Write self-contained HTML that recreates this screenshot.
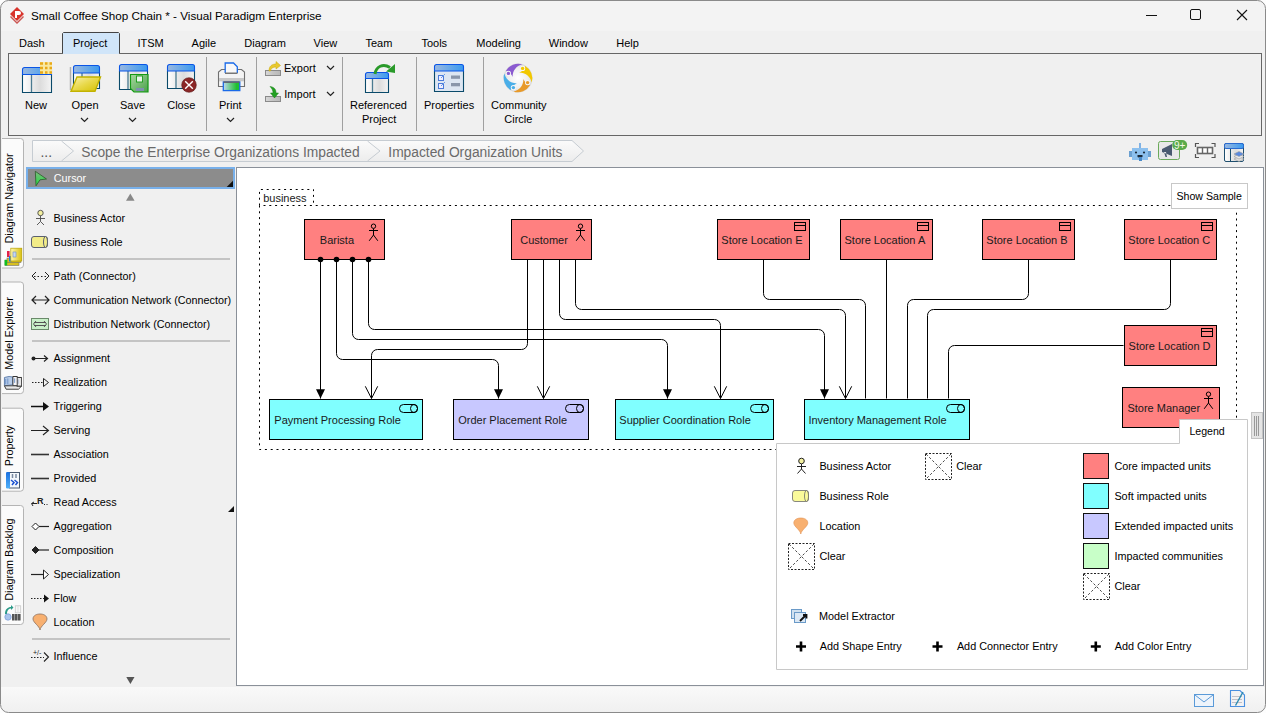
<!DOCTYPE html>
<html><head><meta charset="utf-8"><title>Small Coffee Shop Chain - Visual Paradigm Enterprise</title>
<style>
html,body{margin:0;padding:0;background:#f0f0f0;overflow:hidden;}
svg{display:block;font-family:"Liberation Sans", sans-serif;}
</style></head><body>
<svg width="1266" height="713" viewBox="0 0 1266 713">
<defs>
<linearGradient id="gtitle" x1="0" y1="0" x2="1" y2="0"><stop offset="0" stop-color="#9ab8e0"/><stop offset="1" stop-color="#3a9af0"/></linearGradient>
<linearGradient id="gbody" x1="0" y1="0" x2="1" y2="0"><stop offset="0" stop-color="#ffffff"/><stop offset="0.6" stop-color="#dcdcdc"/><stop offset="1" stop-color="#f4f4f4"/></linearGradient>
<linearGradient id="gfolder" x1="0" y1="0" x2="1" y2="1"><stop offset="0" stop-color="#fbf3b0"/><stop offset="0.5" stop-color="#e8d848"/><stop offset="1" stop-color="#d4c000"/></linearGradient>
<linearGradient id="gsave" x1="0" y1="0" x2="1" y2="1"><stop offset="0" stop-color="#a8d8a0"/><stop offset="1" stop-color="#4aa04a"/></linearGradient>
<linearGradient id="gprint" x1="0" y1="0" x2="1" y2="0"><stop offset="0" stop-color="#c0d8f0"/><stop offset="0.8" stop-color="#20c030"/></linearGradient>
<linearGradient id="gcrumb" x1="0" y1="0" x2="0" y2="1"><stop offset="0" stop-color="#fbfbfb"/><stop offset="1" stop-color="#ececec"/></linearGradient>
<linearGradient id="gstatus" x1="0" y1="0" x2="0" y2="1"><stop offset="0" stop-color="#f9f9f9"/><stop offset="1" stop-color="#f0f0f0"/></linearGradient>
<radialGradient id="gcomm"><stop offset="0" stop-color="#ffffff"/><stop offset="0.7" stop-color="#eeeeee"/><stop offset="1" stop-color="#d8d8d8"/></radialGradient>
<linearGradient id="gbook" x1="0" y1="0" x2="1" y2="0"><stop offset="0" stop-color="#fff8b0"/><stop offset="1" stop-color="#d8c010"/></linearGradient>
<linearGradient id="gprop" x1="0" y1="0" x2="0" y2="1"><stop offset="0" stop-color="#1a70e0"/><stop offset="1" stop-color="#50b0f8"/></linearGradient>
<linearGradient id="gcur" x1="0" y1="0" x2="0" y2="1"><stop offset="0" stop-color="#80b880"/><stop offset="1" stop-color="#20e040"/></linearGradient>
<linearGradient id="gtray" x1="0" y1="0" x2="1" y2="0"><stop offset="0" stop-color="#d8d8d8"/><stop offset="0.5" stop-color="#c4c4c4"/><stop offset="1" stop-color="#b8b8b8"/></linearGradient>
</defs>
<rect x="0" y="0" width="1266" height="713" fill="#f0f0f0"/>
<rect x="0" y="0" width="1266" height="31" fill="#f3f3f3"/>
<g transform="translate(10,7)"><path d="M7 0 L14 7 L7 14 L0 7 Z" fill="#d8342c"/><path d="M1 9 L7 15 L13 9 L14 10 L7 17 L0 10 Z" fill="#c0302a" opacity="0.8"/><path d="M5 4 h4 a2 2 0 0 1 0 4 h-2 v3 h-2 z" fill="#fff"/></g>
<text x="31" y="20" font-size="11.7" fill="#000" text-anchor="start" >Small Coffee Shop Chain * - Visual Paradigm Enterprise</text>
<line x1="1146" y1="15.5" x2="1157" y2="15.5" stroke="#111" stroke-width="1" />
<rect x="1190.5" y="9.5" width="10" height="10" fill="none" stroke="#111" stroke-width="1" rx="1.5"/>
<path d="M1237 10 L1247 20 M1247 10 L1237 20" stroke="#111" stroke-width="1.1"/>
<path d="M62.5 54 V33.5 L63.5 32.5 H118.5 L119.5 33.5 V54" fill="#d0e5f9" stroke="#444" stroke-width="1"/>
<text x="19" y="47" font-size="11" fill="#000" text-anchor="start" >Dash</text>
<text x="73" y="47" font-size="11" fill="#000" text-anchor="start" >Project</text>
<text x="137.4" y="47" font-size="11" fill="#000" text-anchor="start" >ITSM</text>
<text x="191.6" y="47" font-size="11" fill="#000" text-anchor="start" >Agile</text>
<text x="244.3" y="47" font-size="11" fill="#000" text-anchor="start" >Diagram</text>
<text x="313.6" y="47" font-size="11" fill="#000" text-anchor="start" >View</text>
<text x="365.4" y="47" font-size="11" fill="#000" text-anchor="start" >Team</text>
<text x="421.4" y="47" font-size="11" fill="#000" text-anchor="start" >Tools</text>
<text x="476.3" y="47" font-size="11" fill="#000" text-anchor="start" >Modeling</text>
<text x="548.8" y="47" font-size="11" fill="#000" text-anchor="start" >Window</text>
<text x="616.2" y="47" font-size="11" fill="#000" text-anchor="start" >Help</text>
<rect x="8.5" y="53.5" width="1253" height="82" fill="#f0f0f0" stroke="#666"/>
<rect x="63" y="52" width="56" height="2" fill="#d0e5f9"/>
<line x1="206.5" y1="57" x2="206.5" y2="131" stroke="#a0a0a0" stroke-width="1" />
<line x1="256.5" y1="57" x2="256.5" y2="131" stroke="#a0a0a0" stroke-width="1" />
<line x1="342.5" y1="57" x2="342.5" y2="131" stroke="#a0a0a0" stroke-width="1" />
<line x1="416.5" y1="57" x2="416.5" y2="131" stroke="#a0a0a0" stroke-width="1" />
<line x1="483.5" y1="57" x2="483.5" y2="131" stroke="#a0a0a0" stroke-width="1" />
<text x="25" y="108.5" font-size="11" fill="#000" text-anchor="start" >New</text>
<text x="71.6" y="108.5" font-size="11" fill="#000" text-anchor="start" >Open</text>
<text x="120" y="108.5" font-size="11" fill="#000" text-anchor="start" >Save</text>
<text x="167.2" y="109" font-size="11" fill="#000" text-anchor="start" >Close</text>
<text x="219" y="108.5" font-size="11" fill="#000" text-anchor="start" >Print</text>
<text x="284" y="72" font-size="11" fill="#000" text-anchor="start" >Export</text>
<text x="284.3" y="98" font-size="11" fill="#000" text-anchor="start" >Import</text>
<text x="350" y="109" font-size="11" fill="#000" text-anchor="start" >Referenced</text>
<text x="362" y="122.6" font-size="11" fill="#000" text-anchor="start" >Project</text>
<text x="424" y="109" font-size="11" fill="#000" text-anchor="start" >Properties</text>
<text x="491" y="109" font-size="11" fill="#000" text-anchor="start" >Community</text>
<text x="504.3" y="122.6" font-size="11" fill="#000" text-anchor="start" >Circle</text>
<path d="M81.0 118 L84.5 121.5 L88.0 118" fill="none" stroke="#222" stroke-width="1.2"/>
<path d="M129.0 118 L132.5 121.5 L136.0 118" fill="none" stroke="#222" stroke-width="1.2"/>
<path d="M227.0 118 L230.5 121.5 L234.0 118" fill="none" stroke="#222" stroke-width="1.2"/>
<path d="M327.0 66 L330.5 69.5 L334.0 66" fill="none" stroke="#222" stroke-width="1.2"/>
<path d="M327.0 92 L330.5 95.5 L334.0 92" fill="none" stroke="#222" stroke-width="1.2"/>
<g transform="translate(22,67)"><path d="M0.5 7.5 V25.5 H29.5 V7.5" fill="url(#gbody)" stroke="#0a4a6a" stroke-width="1.1"/><line x1="9.5" y1="7.5" x2="9.5" y2="25" stroke="#4a7a90" stroke-width="1.3"/><path d="M0.5 7.5 V2.5 a2 2 0 0 1 2 -2 H27.5 a2 2 0 0 1 2 2 V7.5 Z" fill="url(#gtitle)" stroke="#0a55e6" stroke-width="1.1"/></g>
<g transform="translate(40,62)"><rect x="0" y="0" width="12" height="12" fill="#f8e8a0"/><path d="M0 1.5 H3 M5 1.5 H7.5 M9.5 1.5 H12 M0 6 H3 M5 6 H7.5 M9.5 6 H12 M0 10.5 H3 M5 10.5 H7.5 M9.5 10.5 H12" stroke="#e8a818" stroke-width="2.6"/></g>
<path d="M70.5 67 V90" stroke="#b0b0b0" stroke-width="1.5"/>
<g transform="translate(73,65)"><path d="M0.5 8 V23.5 H26.5 V8" fill="url(#gbody)" stroke="#0a4a6a" stroke-width="1.1"/><line x1="9" y1="8" x2="9" y2="23" stroke="#4a7a90" stroke-width="1.3"/><path d="M0.5 8 V2.5 a2 2 0 0 1 2 -2 H24.5 a2 2 0 0 1 2 2 V8 Z" fill="url(#gtitle)" stroke="#0a55e6" stroke-width="1.1"/></g>
<path d="M71 91.3 L77 77 H100.5 L95 91.3 Z" fill="url(#gfolder)" stroke="#c2b200" stroke-width="1.4"/>
<g transform="translate(119,64)"><path d="M0.5 7 V25.5 H28.5 V7" fill="url(#gbody)" stroke="#0a4a6a" stroke-width="1.1"/><line x1="9" y1="7" x2="9" y2="25" stroke="#4a7a90" stroke-width="1.3"/><path d="M0.5 7 V2.5 a2 2 0 0 1 2 -2 H26.5 a2 2 0 0 1 2 2 V7 Z" fill="url(#gtitle)" stroke="#0a55e6" stroke-width="1.1"/></g>
<g transform="translate(130,74)"><path d="M0.5 0.5 H18 V18 H4 L0.5 14.5 Z" fill="url(#gsave)" stroke="#149a14" stroke-width="1.2"/><rect x="6.5" y="2" width="6" height="6" fill="#eaf5ea" stroke="#149a14" stroke-width="0.9"/><rect x="6" y="14" width="8" height="3" fill="#8090b0"/></g>
<g transform="translate(167,64)"><path d="M0.5 7 V24.5 H27.5 V7" fill="url(#gbody)" stroke="#0a4a6a" stroke-width="1.1"/><line x1="9" y1="7" x2="9" y2="24" stroke="#4a7a90" stroke-width="1.3"/><path d="M0.5 7 V2.5 a2 2 0 0 1 2 -2 H25.5 a2 2 0 0 1 2 2 V7 Z" fill="url(#gtitle)" stroke="#0a55e6" stroke-width="1.1"/></g>
<g transform="translate(189,85)"><circle cx="0" cy="0" r="7.3" fill="#8b2626" stroke="#5a1818" stroke-width="0.6"/><path d="M-3.8 -3.8 L3.8 3.8 M3.8 -3.8 L-3.8 3.8" stroke="#fff" stroke-width="1.4"/></g>
<g><path d="M218.5 86.5 V72 L221.5 69.5 H241.5 L244.5 72 V86.5 Z" fill="#f4f4f4" stroke="#707070" stroke-width="1.1"/><rect x="219" y="78" width="25" height="3.3" fill="#c8c8c8"/><path d="M225.2 73 V63 H233.5 L237.3 66.8 V73" fill="#f8f8f8" stroke="#1a6ae8" stroke-width="1.3"/><rect x="225" y="72.5" width="12.5" height="1.5" fill="#777"/><rect x="223.3" y="82" width="16.5" height="8.6" fill="url(#gprint)" stroke="#1a6ae8" stroke-width="1.3"/><rect x="223.5" y="81.3" width="16" height="1.6" fill="#666"/></g>
<g transform="translate(265,61)"><rect x="0.5" y="9.5" width="15" height="5" fill="url(#gtray)" stroke="#8a8a8a"/><path d="M4 10 C4 5 7 3 11 3 V0.5 L15.5 4.5 L11 8 V6 C8 6 6 7 5.5 10 Z" fill="#e8c830" stroke="#c8a800" stroke-width="0.5"/></g>
<g transform="translate(265,86)"><rect x="0.5" y="10.5" width="15" height="5" fill="url(#gtray)" stroke="#8a8a8a"/><path d="M5 0.5 C9 1 11 3 11 7 H13.5 L9.5 12 L5.5 7 H8 C8 4.5 7 2.5 5 0.5 Z" fill="#22a022" stroke="#178017" stroke-width="0.5"/></g>
<g transform="translate(365,72)"><path d="M0.5 6.5 V20.5 H23.5 V6.5" fill="url(#gbody)" stroke="#0a4a6a" stroke-width="1.1"/><line x1="7.5" y1="6.5" x2="7.5" y2="20" stroke="#4a7a90" stroke-width="1.3"/><path d="M0.5 6.5 V2.5 a2 2 0 0 1 2 -2 H21.5 a2 2 0 0 1 2 2 V6.5 Z" fill="url(#gtitle)" stroke="#0a55e6" stroke-width="1.1"/></g>
<path d="M375 74 C376 66.5 383 63 390 67.5" fill="none" stroke="#2a9a2a" stroke-width="3"/>
<path d="M386 71.5 L395 64 L395 73 Z" fill="#2a9a2a"/>
<g transform="translate(434,64)"><path d="M0.5 7 V27.5 H29.5 V7" fill="#dde6f2" stroke="#0a4a6a" stroke-width="1.1"/><path d="M0.5 7 V2.5 a2 2 0 0 1 2 -2 H27.5 a2 2 0 0 1 2 2 V7 Z" fill="url(#gtitle)" stroke="#0a55e6" stroke-width="1.1"/><rect x="4.5" y="11.5" width="5" height="5" fill="#eef" stroke="#4a7ad8"/><rect x="4.5" y="19.5" width="5" height="5" fill="#eef" stroke="#4a7ad8"/><path d="M7 14 L11 10 M7 22 L11 18" stroke="#6a9ae8" stroke-width="1"/><rect x="17" y="11.5" width="9" height="3.3" fill="#8a96aa"/><rect x="17" y="19" width="9" height="3.3" fill="#8a96aa"/></g>
<g transform="translate(518,78)"><circle r="14.5" fill="url(#gcomm)"/><g transform="rotate(0)"><path d="M4.4 -13.7 A14.2 14.2 0 0 0 -12.1 -7.1 C-9 -6 -6.5 -4 -5.4 -1.1 C-5.5 -7 -2 -12 4.4 -13.7 Z" fill="#8a5ad0"/><circle cx="-9.6" cy="-4.6" r="2.6" fill="#f6f6f6"/><circle cx="-9.6" cy="-4.6" r="1.7" fill="#8a5ad0"/></g><g transform="rotate(90)"><path d="M4.4 -13.7 A14.2 14.2 0 0 0 -12.1 -7.1 C-9 -6 -6.5 -4 -5.4 -1.1 C-5.5 -7 -2 -12 4.4 -13.7 Z" fill="#f2c800"/><circle cx="-9.6" cy="-4.6" r="2.6" fill="#f6f6f6"/><circle cx="-9.6" cy="-4.6" r="1.7" fill="#f2c800"/></g><g transform="rotate(180)"><path d="M4.4 -13.7 A14.2 14.2 0 0 0 -12.1 -7.1 C-9 -6 -6.5 -4 -5.4 -1.1 C-5.5 -7 -2 -12 4.4 -13.7 Z" fill="#e89a2a"/><circle cx="-9.6" cy="-4.6" r="2.6" fill="#f6f6f6"/><circle cx="-9.6" cy="-4.6" r="1.7" fill="#e89a2a"/></g><g transform="rotate(270)"><path d="M4.4 -13.7 A14.2 14.2 0 0 0 -12.1 -7.1 C-9 -6 -6.5 -4 -5.4 -1.1 C-5.5 -7 -2 -12 4.4 -13.7 Z" fill="#4aaee8"/><circle cx="-9.6" cy="-4.6" r="2.6" fill="#f6f6f6"/><circle cx="-9.6" cy="-4.6" r="1.7" fill="#4aaee8"/></g></g>
<path d="M32.5 140.5 H572 L583.5 151 L572 161.5 H32.5 Z" fill="url(#gcrumb)" stroke="#c6ccd2"/>
<path d="M61.5 141 L73.5 151 L61.5 161" fill="none" stroke="#c6ccd2"/>
<path d="M367.5 141 L380 151 L367.5 161" fill="none" stroke="#c6ccd2"/>
<text x="40.5" y="157.3" font-size="13.8" fill="#555" text-anchor="start" >...</text>
<text x="81.3" y="157.3" font-size="13.8" fill="#6a6a6a" text-anchor="start" >Scope the Enterprise Organizations Impacted</text>
<text x="388.3" y="157.3" font-size="13.8" fill="#6a6a6a" text-anchor="start" >Impacted Organization Units</text>
<g transform="translate(1129,142)"><rect x="3" y="6" width="16" height="12" fill="#8cc0ee"/><rect x="0" y="9" width="3" height="6" fill="#6a9fd0"/><rect x="19" y="9" width="3" height="6" fill="#6a9fd0"/><rect x="10" y="1" width="2" height="5" fill="#7fb2e5"/><circle cx="7" cy="10.5" r="1.1" fill="#1a2a3a"/><circle cx="15" cy="10.5" r="1.1" fill="#1a2a3a"/><path d="M8.5 13 H13.5 V15 L11 16 L8.5 15 Z" fill="#1a2a3a"/><rect x="10" y="15" width="3" height="4" fill="#4a8ac8"/></g>
<g transform="translate(1158,141)"><rect x="0.5" y="0.5" width="21" height="18" rx="2" fill="#e8e8e8" stroke="#6aaa5a"/><path d="M4 8 L14 3 V15 L4 11 Z M6 11 L7.5 16 H9 L8 11" fill="#4a5a70"/><rect x="14.2" y="-1" width="15" height="10" rx="5" fill="#5aaa4a"/><text x="21.7" y="7.8" font-size="10" fill="#f8f8e8" text-anchor="middle">9+</text></g>
<g transform="translate(1195,143)"><path d="M0.5 4 V0.5 H4 M16.5 0.5 H20 V4 M20 11 V14.5 H16.5 M4 14.5 H0.5 V11" fill="none" stroke="#555" stroke-width="1.2"/><rect x="2.5" y="4.5" width="15" height="6" fill="#fff" stroke="#666" stroke-width="1.6"/><path d="M7.5 5 V10 M12.5 5 V10" stroke="#666" stroke-width="1.4"/></g>
<g transform="translate(1224,143)"><rect x="0.5" y="0.5" width="19" height="18" rx="1.5" fill="url(#gbody)" stroke="#1e4e6e"/><rect x="0.5" y="0.5" width="19" height="5" rx="1.5" fill="url(#gtitle)" stroke="#2a6bd0"/><line x1="6.5" y1="6" x2="6.5" y2="18" stroke="#1e4e6e"/><path d="M10 16 L15 13.5 L20 16 L15 18.5 Z" fill="#e0e0e0" stroke="#9a9a9a" stroke-width="0.6"/><path d="M10 13.5 L15 11 L20 13.5 L15 16 Z" fill="#e8e8e8" stroke="#9a9a9a" stroke-width="0.6"/><path d="M10 11 L15 8.5 L20 11 L15 13.5 Z" fill="#5a8ae0" stroke="#9a9a9a" stroke-width="0.6"/></g>
<path d="M2 138.5 H20.5 a3 3 0 0 1 3 3 V265 a3 3 0 0 1 -3 3 H2" fill="#fbfbfb" stroke="#b4b4b4"/>
<text transform="translate(13.4,243.5) rotate(-90)" font-size="10.8" fill="#000">Diagram Navigator</text>
<g><rect x="5" y="260" width="14" height="5.5" fill="#d8c020" stroke="#707070" stroke-width="0.6"/><rect x="7" y="258" width="14" height="4.5" fill="#d8c020" stroke="#707070" stroke-width="0.6"/><rect x="7" y="251" width="2.6" height="6" fill="#e0204a"/><rect x="9" y="256" width="2.4" height="5.5" fill="#1a7ae8"/><rect x="4.6" y="260" width="2.6" height="5.5" fill="#10c020"/><rect x="10.8" y="248.2" width="11" height="12.8" fill="url(#gbook)" stroke="#b8a000" stroke-width="0.7"/><rect x="13" y="252" width="3" height="5" fill="#c8d8f0" stroke="#6a8ac8" stroke-width="0.6"/></g>
<path d="M2 282 H20.5 a3 3 0 0 1 3 3 V390.6 a3 3 0 0 1 -3 3 H2" fill="#fbfbfb" stroke="#b4b4b4"/>
<text transform="translate(13.4,369.8) rotate(-90)" font-size="10.8" fill="#000">Model Explorer</text>
<g transform="translate(4,376) scale(0.85,0.98)" stroke-width="1"><path d="M0.5 1.5 L6 0.5 L10 1 V9 L0.5 10 Z" fill="#b8cce8" stroke="#5a7aa8"/><path d="M2 3 V8.5 M4.5 2.5 V8.5" stroke="#6a90c8"/><rect x="15" y="1.5" width="5.5" height="9" fill="#e8e8e8" stroke="#333"/><path d="M16.5 3.5 V8" stroke="#8aa0c8"/><rect x="10.5" y="0.5" width="5" height="9.5" fill="#f4f4f8" stroke="#333"/><path d="M12.5 2.5 V7" stroke="#6a90c8"/><path d="M0.5 10 L2.5 13.5 H17 L20.5 10.5 H15 V10 H0.5 Z" fill="#e8e8e8" stroke="#333"/></g>
<path d="M2 408.2 H20.5 a3 3 0 0 1 3 3 V488.2 a3 3 0 0 1 -3 3 H2" fill="#fbfbfb" stroke="#b4b4b4"/>
<text transform="translate(13.4,466.3) rotate(-90)" font-size="10.8" fill="#000">Property</text>
<g transform="translate(6,472)"><rect x="3.5" y="0.5" width="10" height="15.5" fill="#f4f8fc" stroke="#4a5a70"/><rect x="0" y="0" width="4" height="16.5" rx="1.2" fill="url(#gprop)"/><path d="M6.5 2 V6 M10 2 V6" stroke="#7888a0" stroke-width="1.5"/><path d="M5 8 L8 10.5 L6 13 M8.5 8 L11.5 10.5 L9.5 13" stroke="#1a50d0" stroke-width="1.5" fill="none"/></g>
<path d="M2 505.5 H20.5 a3 3 0 0 1 3 3 V621.5 a3 3 0 0 1 -3 3 H2" fill="#fbfbfb" stroke="#b4b4b4"/>
<text transform="translate(13.4,600.8) rotate(-90)" font-size="10.8" fill="#000">Diagram Backlog</text>
<g transform="translate(4,605)"><path d="M1 9 C1 4 4 2 7 2 V0 L9.5 2.5 L7 5 V3.5 C5 3.5 3 5 3 9 Z" fill="#2a9a88"/><circle cx="4" cy="12" r="3.2" fill="#a8c4ec" stroke="#7a9ad8" stroke-width="0.7"/><rect x="8" y="9" width="2.6" height="6.5" fill="#555"/><rect x="11" y="9" width="2.6" height="6.5" fill="#555"/><rect x="14" y="9" width="2.6" height="6.5" fill="#555"/><rect x="11.3" y="0.8" width="5.4" height="7" fill="#f8f8f8" stroke="#c8c8c8" stroke-width="0.8"/><path d="M14 1 V7.5" stroke="#ddd"/></g>
<rect x="27" y="168" width="207" height="20" fill="#8c8c8c" stroke="#78b0ea" stroke-width="2"/>
<path d="M35.3 171.3 L46.5 179 L40 179.8 L36 185.8 Z" fill="url(#gcur)" stroke="#2a5a2a" stroke-width="0.8"/>
<text x="53.8" y="182" font-size="10.8" fill="#fff" text-anchor="start" >Cursor</text>
<path d="M226.7 187 L233 187 L233 180.8 Z" fill="#111"/>
<path d="M126 200.8 L130.3 193.4 L134.6 200.8 Z" fill="#888"/>
<path d="M126.3 677 L134.5 677 L130.4 684 Z" fill="#555"/>
<g transform="translate(40.5,210)" fill="none" stroke="#4a4a4a" stroke-width="0.9"><circle cx="0" cy="3" r="2.7" fill="#f4f0a0"/><path d="M-4.5 8.5 H4.5 M0 5.7 V11.5 L-3.5 15 M0 11.5 L3.5 15"/></g>
<text x="53.6" y="222" font-size="10.8" fill="#000" text-anchor="start" >Business Actor</text>
<g transform="translate(31,236)"><rect x="0.5" y="0.5" width="16" height="11" rx="2.5" fill="#f2ec88" stroke="#5a6070"/><ellipse cx="14.5" cy="6" rx="2" ry="5.5" fill="#f2ec88" stroke="#5a6070"/></g>
<text x="53.6" y="246" font-size="10.8" fill="#000" text-anchor="start" >Business Role</text>
<rect x="32" y="258" width="198" height="2" fill="#c4c4c4"/>
<g fill="none" stroke="#222"><path d="M36 272 L32 276 L36 280 M45 272 L49 276 L45 280"/><path d="M34 276.5 H47" stroke-dasharray="1.5,2"/></g>
<text x="53.6" y="280" font-size="10.8" fill="#000" text-anchor="start" >Path (Connector)</text>
<g fill="none" stroke="#222" stroke-width="1.2"><path d="M36 296 L32 300 L36 304 M45 296 L49 300 L45 304 M32 300 H49"/></g>
<text x="53.6" y="304" font-size="10.8" fill="#000" text-anchor="start" >Communication Network (Connector)</text>
<g><rect x="31.5" y="318.5" width="17" height="11" fill="#c8f0c8" stroke="#6a8a6a"/><path d="M36 321 L33.5 324 L36 327 M44 321 L46.5 324 L44 327 M34 322.5 H46 M34 325.5 H46" fill="none" stroke="#555"/></g>
<text x="53.6" y="328" font-size="10.8" fill="#000" text-anchor="start" >Distribution Network (Connector)</text>
<rect x="32" y="340" width="198" height="2" fill="#c4c4c4"/>
<g><circle cx="33.5" cy="358.5" r="2" fill="#222"/><path d="M33 358.5 H47 M44 355.5 L47.5 358.5 L44 361.5" fill="none" stroke="#222" stroke-width="1.2"/></g>
<text x="53.6" y="362" font-size="10.8" fill="#000" text-anchor="start" >Assignment</text>
<g fill="none" stroke="#222"><path d="M32 382.5 H43" stroke-dasharray="1.5,1.5"/><path d="M43.5 378.5 L48.5 382.5 L43.5 386.5 Z"/></g>
<text x="53.6" y="386" font-size="10.8" fill="#000" text-anchor="start" >Realization</text>
<g><path d="M31 406.5 H44" stroke="#111" stroke-width="1.5"/><path d="M43 402 L49 406.5 L43 411 Z" fill="#111"/></g>
<text x="53.6" y="410" font-size="10.8" fill="#000" text-anchor="start" >Triggering</text>
<g fill="none" stroke="#222" stroke-width="1.1"><path d="M31 430.5 H48 M43 426 L48.5 430.5 L43 435"/></g>
<text x="53.6" y="434" font-size="10.8" fill="#000" text-anchor="start" >Serving</text>
<path d="M31 454.5 H49" stroke="#333" stroke-width="1.6"/>
<text x="53.6" y="458" font-size="10.8" fill="#000" text-anchor="start" >Association</text>
<path d="M31 478.5 H49" stroke="#333" stroke-width="1.6"/>
<text x="53.6" y="482" font-size="10.8" fill="#000" text-anchor="start" >Provided</text>
<g><path d="M33 506 L31.5 503.5 L34 502 M32 503.5 H37" fill="none" stroke="#222"/><text x="37" y="504" font-size="9" font-weight="bold" fill="#222">R</text><path d="M44 504.5 H49" stroke="#222" stroke-dasharray="1,1.5"/></g>
<text x="53.6" y="506" font-size="10.8" fill="#000" text-anchor="start" >Read Access</text>
<g><path d="M32 526.5 L35.5 523 L39 526.5 L35.5 530 Z" fill="#fff" stroke="#222"/><path d="M39 526.5 H49" stroke="#222" stroke-width="1.2"/></g>
<text x="53.6" y="530" font-size="10.8" fill="#000" text-anchor="start" >Aggregation</text>
<g><path d="M32 550 L35.5 546.5 L39 550 L35.5 553.5 Z" fill="#222" stroke="#222"/><path d="M39 550 H49" stroke="#222" stroke-width="1.2"/></g>
<text x="53.6" y="554" font-size="10.8" fill="#000" text-anchor="start" >Composition</text>
<g><path d="M31 574.5 H44" stroke="#222" stroke-width="1.2"/><path d="M43.5 570 L48.5 574.5 L43.5 579 Z" fill="#fff" stroke="#222"/></g>
<text x="53.6" y="578" font-size="10.8" fill="#000" text-anchor="start" >Specialization</text>
<g><path d="M31 598.5 H44" stroke="#222" stroke-dasharray="1.5,1.5"/><path d="M44 594.5 L49 598.5 L44 602.5 Z" fill="#111"/></g>
<text x="53.6" y="602" font-size="10.8" fill="#000" text-anchor="start" >Flow</text>
<g transform="translate(40,622)"><path d="M0 8 C-0.5 4 -7 0.5 -7 -3 C-7 -6.5 -3.5 -8 0 -8 C3.5 -8 7 -6.5 7 -3 C7 0.5 0.5 4 0 8 Z" fill="#f8b070" stroke="#8a7060" stroke-width="0.8"/></g>
<text x="53.6" y="626" font-size="10.8" fill="#000" text-anchor="start" >Location</text>
<rect x="32" y="638" width="198" height="2" fill="#c4c4c4"/>
<g fill="none" stroke="#222"><path d="M31 657.5 H44" stroke-dasharray="1.5,1.5"/><path d="M44 652.5 L48.5 657 L44 661.5" stroke-width="1.1"/><text x="33" y="655" font-size="7" fill="#222" stroke="none">+/-</text></g>
<text x="53.6" y="660" font-size="10.8" fill="#000" text-anchor="start" >Influence</text>
<path d="M228 512 L234 506 L234 512 Z" fill="#111"/>
<rect x="236.5" y="167.5" width="1027" height="518" fill="#fff" stroke="#8a9099"/>
<path d="M259.5 205.5 V449.5 H1236.5 V205.5 H259.5 M259.5 205.5 V189.5 H313.5 V205.5" fill="none" stroke="#000" stroke-dasharray="2,3.8"/>
<text x="263.2" y="201.7" font-size="11" fill="#1a1a1a" text-anchor="start" >business</text>
<rect x="1171.5" y="183.5" width="76" height="25" fill="#fff" stroke="#c8c8c8"/>
<text x="1176.5" y="199.7" font-size="10.6" fill="#000" text-anchor="start" >Show Sample</text>
<rect x="304.5" y="219.5" width="80" height="40" fill="#ff8080" stroke="#000"/>
<text x="319.8" y="244" font-size="11" fill="#1a1a1a" text-anchor="start" >Barista</text>
<g fill="none" stroke="#000" stroke-width="1"><circle cx="373.5" cy="226.2" r="2.2"/><path d="M369.0 230.5 H378.0 M373.5 228.5 V235 L369.2 240.8 M373.5 235 L377.8 240.8"/></g>
<rect x="511.5" y="219.5" width="80" height="40" fill="#ff8080" stroke="#000"/>
<text x="520.2" y="244" font-size="11" fill="#1a1a1a" text-anchor="start" >Customer</text>
<g fill="none" stroke="#000" stroke-width="1"><circle cx="580.5" cy="226.2" r="2.2"/><path d="M576.0 230.5 H585.0 M580.5 228.5 V235 L576.2 240.8 M580.5 235 L584.8 240.8"/></g>
<rect x="717.5" y="219.5" width="92" height="40" fill="#ff8080" stroke="#000"/>
<text x="721.3" y="244" font-size="11" fill="#1a1a1a" text-anchor="start" >Store Location E</text>
<g fill="none" stroke="#000"><rect x="794.5" y="222.5" width="11" height="8"/><path d="M794.5 225.5 H805.5"/></g>
<rect x="840.5" y="219.5" width="92" height="40" fill="#ff8080" stroke="#000"/>
<text x="844.5" y="244" font-size="11" fill="#1a1a1a" text-anchor="start" >Store Location A</text>
<g fill="none" stroke="#000"><rect x="917.5" y="222.5" width="11" height="8"/><path d="M917.5 225.5 H928.5"/></g>
<rect x="982.5" y="219.5" width="92" height="40" fill="#ff8080" stroke="#000"/>
<text x="986.3" y="244" font-size="11" fill="#1a1a1a" text-anchor="start" >Store Location B</text>
<g fill="none" stroke="#000"><rect x="1059.5" y="222.5" width="11" height="8"/><path d="M1059.5 225.5 H1070.5"/></g>
<rect x="1124.5" y="219.5" width="92" height="40" fill="#ff8080" stroke="#000"/>
<text x="1128.3" y="244" font-size="11" fill="#1a1a1a" text-anchor="start" >Store Location C</text>
<g fill="none" stroke="#000"><rect x="1201.5" y="222.5" width="11" height="8"/><path d="M1201.5 225.5 H1212.5"/></g>
<rect x="1124.5" y="325.5" width="92" height="40" fill="#ff8080" stroke="#000"/>
<text x="1128.6" y="350" font-size="11" fill="#1a1a1a" text-anchor="start" >Store Location D</text>
<g fill="none" stroke="#000"><rect x="1201.5" y="328.5" width="11" height="8"/><path d="M1201.5 331.5 H1212.5"/></g>
<rect x="1122.5" y="387.5" width="97" height="40" fill="#ff8080" stroke="#000"/>
<text x="1127.4" y="412" font-size="11" fill="#1a1a1a" text-anchor="start" >Store Manager</text>
<g fill="none" stroke="#000" stroke-width="1"><circle cx="1208.5" cy="394.2" r="2.2"/><path d="M1204.0 398.5 H1213.0 M1208.5 396.5 V403 L1204.2 408.8 M1208.5 403 L1212.8 408.8"/></g>
<rect x="269.5" y="399.5" width="153" height="40" fill="#80ffff" stroke="#000"/>
<text x="274.3" y="424" font-size="11" fill="#1a1a1a" text-anchor="start" >Payment Processing Role</text>
<g fill="none" stroke="#000"><path d="M403.5 404.5 H414 A3.5 4 0 0 1 414 412.5 H403.5 A4 4 0 0 1 403.5 404.5 Z"/><ellipse cx="414" cy="408.5" rx="3.5" ry="4"/></g>
<rect x="453.5" y="399.5" width="135" height="40" fill="#c8c8ff" stroke="#000"/>
<text x="458.2" y="424" font-size="11" fill="#1a1a1a" text-anchor="start" >Order Placement Role</text>
<g fill="none" stroke="#000"><path d="M569.5 404.5 H580 A3.5 4 0 0 1 580 412.5 H569.5 A4 4 0 0 1 569.5 404.5 Z"/><ellipse cx="580" cy="408.5" rx="3.5" ry="4"/></g>
<rect x="615.5" y="399.5" width="158" height="40" fill="#80ffff" stroke="#000"/>
<text x="619.3" y="424" font-size="11" fill="#1a1a1a" text-anchor="start" >Supplier Coordination Role</text>
<g fill="none" stroke="#000"><path d="M754.5 404.5 H765 A3.5 4 0 0 1 765 412.5 H754.5 A4 4 0 0 1 754.5 404.5 Z"/><ellipse cx="765" cy="408.5" rx="3.5" ry="4"/></g>
<rect x="804.5" y="399.5" width="165" height="40" fill="#80ffff" stroke="#000"/>
<text x="808.4" y="424" font-size="11" fill="#1a1a1a" text-anchor="start" >Inventory Management Role</text>
<g fill="none" stroke="#000"><path d="M950.5 404.5 H961 A3.5 4 0 0 1 961 412.5 H950.5 A4 4 0 0 1 950.5 404.5 Z"/><ellipse cx="961" cy="408.5" rx="3.5" ry="4"/></g>
<path d="M320.5 259.5 L320.5 398.5" fill="none" stroke="#000" stroke-width="1"/>
<path d="M316.0 389.2 L325.0 389.2 L320.5 398.5 Z" fill="#000"/>
<path d="M336.5 259.5 L336.5 353.5 A6 6 0 0 0 342.5 359.5 L492.5 359.5 A6 6 0 0 1 498.5 365.5 L498.5 398.5" fill="none" stroke="#000" stroke-width="1"/>
<path d="M494.0 389.2 L503.0 389.2 L498.5 398.5 Z" fill="#000"/>
<path d="M352.5 259.5 L352.5 333.5 A6 6 0 0 0 358.5 339.5 L661.5 339.5 A6 6 0 0 1 667.5 345.5 L667.5 398.5" fill="none" stroke="#000" stroke-width="1"/>
<path d="M663.0 389.2 L672.0 389.2 L667.5 398.5 Z" fill="#000"/>
<path d="M368.5 259.5 L368.5 323.5 A6 6 0 0 0 374.5 329.5 L818.5 329.5 A6 6 0 0 1 824.5 335.5 L824.5 398.5" fill="none" stroke="#000" stroke-width="1"/>
<path d="M820.0 389.2 L829.0 389.2 L824.5 398.5 Z" fill="#000"/>
<path d="M527.5 259.5 L527.5 343.5 A6 6 0 0 1 521.5 349.5 L377.5 349.5 A6 6 0 0 0 371.5 355.5 L371.5 398.5" fill="none" stroke="#000" stroke-width="1"/>
<path d="M365.3 386.3 L371.5 398.5 L377.7 386.3" fill="none" stroke="#000"/>
<path d="M543.5 259.5 L543.5 398.5" fill="none" stroke="#000" stroke-width="1"/>
<path d="M537.3 386.3 L543.5 398.5 L549.7 386.3" fill="none" stroke="#000"/>
<path d="M559.5 259.5 L559.5 313.5 A6 6 0 0 0 565.5 319.5 L714.5 319.5 A6 6 0 0 1 720.5 325.5 L720.5 398.5" fill="none" stroke="#000" stroke-width="1"/>
<path d="M714.3 386.3 L720.5 398.5 L726.7 386.3" fill="none" stroke="#000"/>
<path d="M575.5 259.5 L575.5 303.5 A6 6 0 0 0 581.5 309.5 L839.5 309.5 A6 6 0 0 1 845.5 315.5 L845.5 398.5" fill="none" stroke="#000" stroke-width="1"/>
<path d="M839.3 386.3 L845.5 398.5 L851.7 386.3" fill="none" stroke="#000"/>
<path d="M763.5 259.5 L763.5 293.5 A6 6 0 0 0 769.5 299.5 L859.5 299.5 A6 6 0 0 1 865.5 305.5 L865.5 398.5" fill="none" stroke="#000" stroke-width="1"/>
<path d="M886.5 259.5 L886.5 398.5" fill="none" stroke="#000" stroke-width="1"/>
<path d="M1028.5 259.5 L1028.5 293.5 A6 6 0 0 1 1022.5 299.5 L913.5 299.5 A6 6 0 0 0 907.5 305.5 L907.5 398.5" fill="none" stroke="#000" stroke-width="1"/>
<path d="M1170.5 259.5 L1170.5 303.5 A6 6 0 0 1 1164.5 309.5 L933.5 309.5 A6 6 0 0 0 927.5 315.5 L927.5 398.5" fill="none" stroke="#000" stroke-width="1"/>
<path d="M1123.5 345.5 L954.5 345.5 A6 6 0 0 0 948.5 351.5 L948.5 398.5" fill="none" stroke="#000" stroke-width="1"/>
<circle cx="320.5" cy="259.5" r="2.8" fill="#000"/>
<circle cx="336.5" cy="259.5" r="2.8" fill="#000"/>
<circle cx="352.5" cy="259.5" r="2.8" fill="#000"/>
<circle cx="368.5" cy="259.5" r="2.8" fill="#000"/>
<rect x="1251.5" y="412.5" width="11" height="26" fill="#e4e4e4" stroke="#c4c4c4"/>
<path d="M1254.5 416 V436 M1256.5 416 V436 M1258.5 416 V436" stroke="#999"/>
<path d="M776.5 669.5 V443.5 H1179.5 V419.5 H1247.5 V669.5 Z" fill="#fff" stroke="#c8c8c8"/>
<text x="1189.4" y="435" font-size="10.6" fill="#000" text-anchor="start" >Legend</text>
<g transform="translate(801.5,458)" fill="none" stroke="#222"><circle cx="0" cy="3" r="2.8" fill="#f4f0a0"/><path d="M-4.5 8.5 H4.5 M0 6 V11 L-4 15.5 M0 11 L4 15.5"/></g>
<text x="819.4" y="470.3" font-size="10.85" fill="#000" text-anchor="start" >Business Actor</text>
<g fill="none" stroke="#222" stroke-width="1" stroke-dasharray="2,1.5"><rect x="925.5" y="453.5" width="26" height="26"/><path d="M926 454 L951 479 M951 454 L926 479" stroke="#333" stroke-width="0.9" stroke-dasharray="2.5,2"/></g>
<text x="956.2" y="470.3" font-size="10.85" fill="#000" text-anchor="start" >Clear</text>
<g transform="translate(792,490)"><rect x="0.5" y="0.5" width="16" height="11" rx="2.5" fill="#fafa9a" stroke="#6a6a6a" stroke-width="0.8"/><ellipse cx="14.5" cy="6" rx="2" ry="5.5" fill="#fafa9a" stroke="#6a6a6a" stroke-width="0.8"/></g>
<text x="819.4" y="500" font-size="10.85" fill="#000" text-anchor="start" >Business Role</text>
<g transform="translate(800.8,526)"><path d="M0 8 C-0.5 4 -7 0.5 -7 -3 C-7 -6.5 -3.5 -8 0 -8 C3.5 -8 7 -6.5 7 -3 C7 0.5 0.5 4 0 8 Z" fill="#f8b070" stroke="#e09050" stroke-width="0.6"/></g>
<text x="819.4" y="530" font-size="10.85" fill="#000" text-anchor="start" >Location</text>
<g fill="none" stroke="#222" stroke-width="1" stroke-dasharray="2,1.5"><rect x="788.5" y="543.5" width="26" height="26"/><path d="M789 544 L814 569 M814 544 L789 569" stroke="#333" stroke-width="0.9" stroke-dasharray="2.5,2"/></g>
<text x="819.4" y="560" font-size="10.85" fill="#000" text-anchor="start" >Clear</text>
<rect x="1083.5" y="453.5" width="25" height="25" fill="#ff8080" stroke="#111"/>
<text x="1114.4" y="470" font-size="10.85" fill="#000" text-anchor="start" >Core impacted units</text>
<rect x="1083.5" y="483.5" width="25" height="25" fill="#80ffff" stroke="#111"/>
<text x="1114.4" y="500" font-size="10.85" fill="#000" text-anchor="start" >Soft impacted units</text>
<rect x="1083.5" y="513.5" width="25" height="25" fill="#c8c8ff" stroke="#111"/>
<text x="1114.4" y="530" font-size="10.85" fill="#000" text-anchor="start" >Extended impacted units</text>
<rect x="1083.5" y="543.5" width="25" height="25" fill="#c8ffc8" stroke="#111"/>
<text x="1114.4" y="560" font-size="10.85" fill="#000" text-anchor="start" >Impacted communities</text>
<g fill="none" stroke="#222" stroke-width="1" stroke-dasharray="2,1.5"><rect x="1083.5" y="573.5" width="26" height="26"/><path d="M1084 574 L1109 599 M1109 574 L1084 599" stroke="#333" stroke-width="0.9" stroke-dasharray="2.5,2"/></g>
<text x="1114.4" y="590" font-size="10.85" fill="#000" text-anchor="start" >Clear</text>
<g transform="translate(791,609)"><rect x="0.5" y="0.5" width="10" height="9" fill="#cfe0f0" stroke="#6a9ac8"/><rect x="3.5" y="3.5" width="11" height="10" fill="#dbe8f5" stroke="#6a9ac8"/><path d="M9 12 L15 6 M12 6 H15.5 V9.5" stroke="#111" stroke-width="1.8" fill="none"/></g>
<text x="819" y="620.2" font-size="10.85" fill="#000" text-anchor="start" >Model Extractor</text>
<path d="M796 646.5 H806 M801 641.5 V651.5" stroke="#000" stroke-width="2.6"/>
<text x="819.8" y="650" font-size="10.85" fill="#000" text-anchor="start" >Add Shape Entry</text>
<path d="M932.5 646.5 H942.5 M937.5 641.5 V651.5" stroke="#000" stroke-width="2.6"/>
<text x="956.9" y="650" font-size="10.85" fill="#000" text-anchor="start" >Add Connector Entry</text>
<path d="M1090.8 646.5 H1100.8 M1095.8 641.5 V651.5" stroke="#000" stroke-width="2.6"/>
<text x="1114.8" y="650" font-size="10.85" fill="#000" text-anchor="start" >Add Color Entry</text>
<rect x="1" y="687" width="1264" height="25" fill="url(#gstatus)"/>
<g transform="translate(1194,694)"><rect x="0.5" y="0.5" width="19" height="12" fill="#eef4fb" stroke="#5a9ad8"/><path d="M1 1 L10 8 L19 1" fill="none" stroke="#5a9ad8"/></g>
<g transform="translate(1230,690)"><path d="M0.5 0.5 H10 L14.5 5 V16.5 H0.5 Z" fill="#f2f2f4" stroke="#4a90e0" stroke-width="1.1"/><path d="M2 6.5 H12 M2 9.5 H12 M2 12.5 H12" stroke="#c0c0c8"/><path d="M5.5 15.5 L13 2" stroke="#2a8ab0" stroke-width="1.4"/></g>
<path fill-rule="evenodd" d="M0 0 H1266 V713 H0 Z M8.5 0.5 H1257.5 A8 8 0 0 1 1265.5 8.5 V704.5 A8 8 0 0 1 1257.5 712.5 H8.5 A8 8 0 0 1 0.5 704.5 V8.5 A8 8 0 0 1 8.5 0.5 Z" fill="#fdfdfd"/>
<rect x="0.5" y="0.5" width="1265" height="712" rx="8" fill="none" stroke="#8a8a8a"/>
</svg>
</body></html>
